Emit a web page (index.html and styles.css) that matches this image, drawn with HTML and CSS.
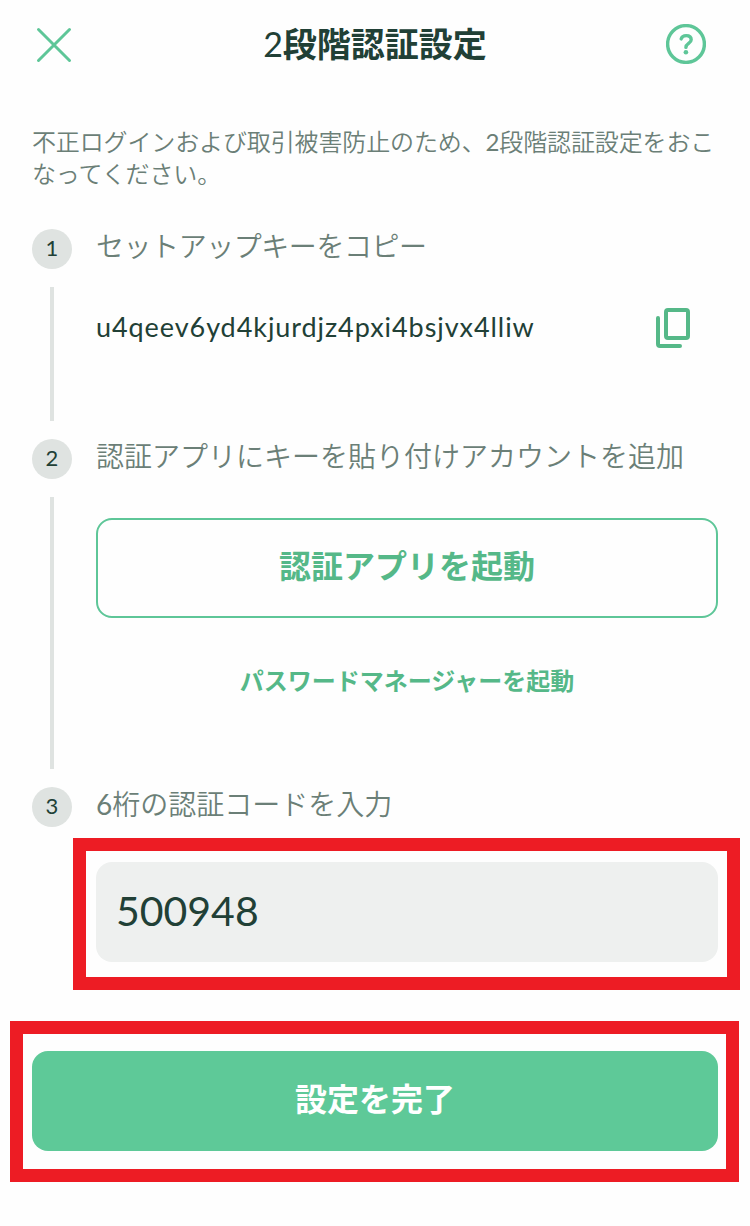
FILE: index.html
```html
<!DOCTYPE html>
<html lang="ja">
<head>
    <meta charset="UTF-8">
    <meta name="viewport" content="width=device-width, initial-scale=1.0">
    <title>2段階認証設定</title>
    <link rel="stylesheet" href="styles.css">
</head>
<body>
    <header class="header">
        <svg class="close-icon" width="44" height="44" viewBox="0 0 44 44">
            <path d="M6.5 6.5L37.5 37.5M37.5 6.5L6.5 37.5" />
        </svg>
        <h1 class="title"><span class="digit">2</span>段階認証設定</h1>
        <svg class="help-icon" width="40" height="40" viewBox="0 0 40 40">
            <circle cx="20" cy="20" r="18.4" />
            <path d="M15.2 14.9C15.8 12.6 17.8 11.6 20.2 11.6C23.2 11.6 25.2 13.2 25.2 15.8C25.2 19.5 19.9 19.4 19.9 23.4" />
            <circle class="help-dot" cx="19.9" cy="28.3" r="2.3" />
        </svg>
    </header>

    <main class="content">
        <p class="description">不正ログインおよび取引被害防止のため、<span class="digit">2</span>段階認証設定をおこなってください。</p>

        <section class="step step-copy">
            <div class="step-marker"><span class="step-number">1</span></div>
            <div class="step-body">
                <h2 class="step-title">セットアップキーをコピー</h2>
                <div class="key-row">
                    <span class="setup-key">u4qeev6yd4kjurdjz4pxi4bsjvx4lliw</span>
                    <svg class="copy-icon" width="34" height="40" viewBox="0 0 34 40">
                        <rect x="10" y="2" width="22" height="28" rx="2" />
                        <path d="M2 10V36Q2 38 4 38H24" />
                    </svg>
                </div>
            </div>
        </section>

        <section class="step step-app">
            <div class="step-marker"><span class="step-number">2</span></div>
            <div class="step-body">
                <h2 class="step-title">認証アプリにキーを貼り付けアカウントを追加</h2>
                <button class="button button-outline">認証アプリを起動</button>
                <a class="manager-link">パスワードマネージャーを起動</a>
            </div>
        </section>

        <section class="step step-code">
            <div class="step-marker"><span class="step-number">3</span></div>
            <div class="step-body">
                <h2 class="step-title"><span class="digit">6</span>桁の認証コードを入力</h2>
                <div class="highlight highlight-code">
                    <input class="code-input" type="text" value="500948">
                </div>
            </div>
        </section>

        <div class="highlight highlight-submit">
            <button class="button button-primary">設定を完了</button>
        </div>
    </main>
</body>
</html>
```
FILE: styles.css
```css
* {
    box-sizing: border-box;
}

body {
    margin: 0;
    min-height: 1226px;
    background-color: #fefefe;
    color: #214036;
    font-family: Lato, 'Noto Sans CJK JP', sans-serif;
}

/* Header */
.header {
    display: grid;
    grid-template-columns: 44px 1fr 44px;
    align-items: center;
    height: 88px;
    padding: 0 32px;
}

.close-icon,
.help-icon,
.copy-icon {
    display: block;
    fill: none;
    stroke: #5ec698;
    stroke-linecap: round;
}

.close-icon {
    stroke-width: 3;
    margin-top: 2px;
}

.help-icon {
    stroke-width: 3.4;
    margin-left: -8px;
}

.help-icon .help-dot {
    fill: #5ec698;
    stroke: none;
}

.title {
    margin: 0;
    font-size: 34px;
    line-height: 48px;
    font-weight: 700;
    text-align: center;
}

.digit {
    font-weight: 400;
}

/* Content */
.content {
    padding: 38px 32px 0;
}

.description {
    margin: 0 0 38px;
    font-size: 24px;
    line-height: 32px;
    font-weight: 350;
    letter-spacing: -0.13px;
    color: #6b7f77;
}

/* Steps */
.step {
    display: flex;
    gap: 24px;
}

.step-copy {
    height: 210px;
    margin-top: 39px;
}

.step-copy .step-title {
    letter-spacing: -0.45px;
}

.step-app {
    height: 348px;
}

.step-code {
    height: 264px;
}

.step-marker {
    display: flex;
    flex-direction: column;
    align-items: center;
    gap: 18px;
    width: 40px;
}

.step-marker::after {
    content: '';
    flex: 1;
    width: 4px;
    margin-bottom: 18px;
    background-color: #dfe3e1;
}

.step-code .step-marker::after {
    display: none;
}

.step-number {
    width: 40px;
    height: 40px;
    border-radius: 50%;
    background-color: #dfe3e1;
    font-size: 22px;
    line-height: 38px;
    text-align: center;
}

.step-body {
    flex: 1;
}

.step-title {
    margin: 0;
    font-size: 28px;
    line-height: 34px;
    font-weight: 350;
    color: #6b7f77;
}

.key-row {
    display: flex;
    justify-content: space-between;
    align-items: center;
    height: 40px;
    margin-top: 45px;
    padding-right: 28px;
}

.setup-key {
    font-size: 27px;
    line-height: 40px;
    letter-spacing: 0.93px;
    padding-bottom: 3px;
}

.copy-icon {
    stroke: #55b888;
    stroke-width: 4;
}

/* Buttons */
.button {
    display: block;
    width: 100%;
    height: 100px;
    border: none;
    border-radius: 16px;
    font-family: inherit;
    font-size: 32px;
    font-weight: 700;
    padding: 0 0 9px;
}

.button-outline {
    margin-top: 45px;
    border: 2px solid #5ec698;
    background-color: #fefefe;
    color: #55b888;
}

.button-primary {
    background-color: #5ec998;
    color: #fff;
}

.manager-link {
    display: block;
    margin-top: 47px;
    font-size: 24px;
    line-height: 32px;
    font-weight: 700;
    text-align: center;
    color: #55b888;
}

.code-input {
    display: block;
    width: 100%;
    height: 100px;
    padding: 0 20px 4px;
    border: none;
    border-radius: 16px;
    background-color: #eef0ef;
    color: #214036;
    font-family: inherit;
    font-size: 41px;
}

/* Red frames around the fields to fill in */
.highlight {
    position: relative;
}

.highlight::after {
    content: '';
    position: absolute;
    border: 13px solid #ed1c24;
    pointer-events: none;
}

.highlight-code {
    margin-top: 41px;
}

.highlight-code::after {
    inset: -24px -22px -28px -23px;
}

.highlight-submit::after {
    inset: -30px -21px -31px -22px;
}
```
